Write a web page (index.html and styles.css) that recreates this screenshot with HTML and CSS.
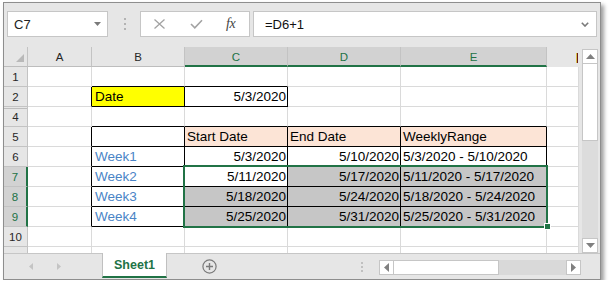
FILE: index.html
```html
<!DOCTYPE html>
<html>
<head>
<meta charset="utf-8">
<link rel="stylesheet" href="styles.css">
</head>
<body>
<div class="window">
  <div class="fbar">
    <div class="namebox"><span>C7</span>
      <svg class="dd" width="7" height="4" viewBox="0 0 7 4"><polygon points="0,0 7,0 3.5,4" fill="#7a7a7a"/></svg>
    </div>
    <div class="vdots"><i></i><i></i><i></i></div>
    <div class="btnbox">
      <svg class="ic-x" width="11" height="10" viewBox="0 0 11 10"><path d="M0.5 0.5 L10.5 9.5 M10.5 0.5 L0.5 9.5" stroke="#a3a3a3" stroke-width="1.3" fill="none"/></svg>
      <svg class="ic-ok" width="13" height="10" viewBox="0 0 13 10"><polyline points="1,5 4.8,8.8 12,1.2" stroke="#a3a3a3" stroke-width="1.6" fill="none"/></svg>
      <span class="fx">fx</span>
    </div>
    <div class="finput"><span>=D6+1</span>
      <svg class="chev" width="8" height="5" viewBox="0 0 8 5"><polyline points="0.8,0.8 4,4 7.2,0.8" stroke="#7a7a7a" stroke-width="1.6" fill="none"/></svg>
    </div>
  </div>

  <div class="main">
    <div class="sheet">
      <div class="grid">
        <div class="ch corner"><svg width="8" height="8" viewBox="0 0 8 8"><polygon points="8,0 8,8 0,8" fill="#b9b9b9"/></svg></div>
        <div class="ch">A</div><div class="ch">B</div>
        <div class="ch sel">C</div><div class="ch sel">D</div><div class="ch sel">E</div>
        <div class="ch last"><span class="cur"></span></div>

        <div class="rh">1</div>
        <div class="c"></div><div class="c kb"></div><div class="c kb"></div><div class="c"></div><div class="c"></div><div class="c"></div>

        <div class="rh">2</div>
        <div class="c kr"></div><div class="c kr kb yellow">Date</div><div class="c kr kb num">5/3/2020</div><div class="c"></div><div class="c"></div><div class="c"></div>

        <div class="rh r4">4</div>
        <div class="c"></div><div class="c kb"></div><div class="c kb"></div><div class="c kb"></div><div class="c kb"></div><div class="c"></div>

        <div class="rh">5</div>
        <div class="c kr"></div><div class="c kr kb"></div><div class="c kr kb peach">Start Date</div><div class="c kr kb peach">End Date</div><div class="c kr kb peach">WeeklyRange</div><div class="c"></div>

        <div class="rh">6</div>
        <div class="c kr"></div><div class="c kr kb wk">Week1</div><div class="c kr kb num">5/3/2020</div><div class="c kr kb num">5/10/2020</div><div class="c kr kb">5/3/2020 - 5/10/2020</div><div class="c"></div>

        <div class="rh rsel">7</div>
        <div class="c kr"></div><div class="c kr kb wk">Week2</div><div class="c kr kb num">5/11/2020</div><div class="c kr kb num hl">5/17/2020</div><div class="c kr kb hl">5/11/2020 - 5/17/2020</div><div class="c"></div>

        <div class="rh rsel">8</div>
        <div class="c kr"></div><div class="c kr kb wk">Week3</div><div class="c kr kb num hl">5/18/2020</div><div class="c kr kb num hl">5/24/2020</div><div class="c kr kb hl">5/18/2020 - 5/24/2020</div><div class="c"></div>

        <div class="rh rsel">9</div>
        <div class="c kr"></div><div class="c kr kb wk">Week4</div><div class="c kr kb num hl">5/25/2020</div><div class="c kr kb num hl">5/31/2020</div><div class="c kr kb hl">5/25/2020 - 5/31/2020</div><div class="c"></div>

        <div class="rh">10</div>
        <div class="c"></div><div class="c"></div><div class="c"></div><div class="c"></div><div class="c"></div><div class="c"></div>

        <div class="rh part"></div>
        <div class="c part"></div><div class="c part"></div><div class="c part"></div><div class="c part"></div><div class="c part"></div><div class="c part"></div>
      </div>
      <div class="selbox"><span class="handle"></span></div>
    </div>
    <div class="vscroll">
      <div class="sbtn"><svg width="9" height="5" viewBox="0 0 9 5"><polygon points="0,5 9,5 4.5,0" fill="#808080"/></svg></div>
      <div class="vthumb"></div>
      <div class="vtrack"></div>
      <div class="sbtn"><svg width="9" height="5" viewBox="0 0 9 5"><polygon points="0,0 9,0 4.5,5" fill="#808080"/></svg></div>
    </div>
  </div>

  <div class="tabbar">
    <div class="nav">
      <svg width="4" height="7" viewBox="0 0 4 7"><polygon points="4,0 4,7 0,3.5" fill="#c4c4c4"/></svg>
      <svg class="navr" width="4" height="7" viewBox="0 0 4 7"><polygon points="0,0 0,7 4,3.5" fill="#c4c4c4"/></svg>
    </div>
    <div class="tab">Sheet1</div>
    <svg class="add" width="15" height="15" viewBox="0 0 15 15"><circle cx="7.5" cy="7.5" r="6.6" fill="none" stroke="#7a7a7a" stroke-width="1.2"/><path d="M7.5 4 V11 M4 7.5 H11" stroke="#7a7a7a" stroke-width="1.4"/></svg>
    <div class="vdots small"><i></i><i></i><i></i></div>
    <div class="hscroll">
      <div class="sbtn h"><svg width="5" height="9" viewBox="0 0 5 9"><polygon points="5,0 5,9 0,4.5" fill="#808080"/></svg></div>
      <div class="hthumb"></div>
      <div class="htrack"></div>
      <div class="sbtn h"><svg width="5" height="9" viewBox="0 0 5 9"><polygon points="0,0 0,9 5,4.5" fill="#808080"/></svg></div>
    </div>
  </div>
</div>
</body>
</html>
```

FILE: styles.css
```css
* { box-sizing: border-box; }
body {
  margin: 0;
  background: #fff;
  font-family: "Liberation Sans", Arial, sans-serif;
}
.window {
  margin: 2px 0 0 3px;
  width: 598px;
  height: 278px;
  border: 1px solid #8e8e8e;
  background: #e6e6e6;
  box-shadow: 3px 3px 4px rgba(0,0,0,0.38);
  display: flex;
  flex-direction: column;
}

/* formula bar */
.fbar {
  height: 44px;
  flex: none;
  display: flex;
  align-items: flex-start;
  padding-top: 8px;
}
.namebox {
  margin-left: 3px;
  width: 101px;
  height: 26px;
  background: #fff;
  border: 1px solid #c6c6c6;
  display: flex;
  align-items: center;
  justify-content: space-between;
  padding: 0 6px 0 6px;
  font-size: 13px;
  color: #222;
}
.namebox .dd { margin-right: 0; }
.vdots {
  margin-left: 16px;
  margin-top: 7px;
  display: flex;
  flex-direction: column;
  gap: 3px;
}
.vdots i {
  display: block;
  width: 2px;
  height: 2px;
  background: #b3b3b3;
}
.btnbox {
  margin-left: 14px;
  width: 110px;
  height: 26px;
  background: #fff;
  border: 1px solid #c6c6c6;
  display: flex;
  align-items: center;
}
.ic-x { margin-left: 13px; }
.ic-ok { margin-left: 25px; }
.fx {
  margin-left: 23px;
  font-family: "Liberation Serif", "DejaVu Serif", serif;
  font-style: italic;
  font-size: 14px;
  color: #444;
  letter-spacing: -0.5px;
}
.finput {
  margin-left: 3px;
  width: 344px;
  height: 26px;
  background: #fff;
  border: 1px solid #c6c6c6;
  display: flex;
  align-items: center;
  justify-content: space-between;
  padding: 0 7px 0 11px;
  font-size: 13px;
  color: #111;
}

/* sheet */
.main {
  height: 206px;
  flex: none;
  display: flex;
}
.sheet {
  position: relative;
  width: 575px;
}
.grid {
  display: grid;
  grid-template-columns: 24px 64px 93px 103px 113px 146px 32px;
  grid-template-rows: repeat(10, 20px) 6px;
  background: #fff;
  font-size: 13.5px;
  color: #000;
}
.ch {
  background: #e6e6e6;
  border-right: 1px solid #c3c3c3;
  border-bottom: 1px solid #bdbdbd;
  font-size: 11.5px;
  color: #262626;
  display: flex;
  align-items: center;
  justify-content: center;
  padding-top: 1px;
}
.ch.corner {
  align-items: flex-end;
  justify-content: flex-end;
  padding: 0 3px 4px 0;
}
.ch.sel {
  background: #d2d2d2;
  color: #217346;
  border-bottom: 2px solid #217346;
  padding-top: 2px;
}
.ch.last {
  border-right: none;
  border-bottom: none;
  background: #e6e6e6;
  justify-content: flex-end;
  padding-right: 1px;
  align-items: flex-start;
}
.cur {
  display: block;
  width: 2px;
  height: 10px;
  margin-top: 5px;
  background: #6e1a1a;
  border-left: 1px solid #d6c24a;
}
.rh {
  background: #e6e6e6;
  border-right: 1px solid #c3c3c3;
  border-bottom: 1px solid #c3c3c3;
  font-size: 11.5px;
  color: #262626;
  display: flex;
  align-items: center;
  justify-content: center;
  padding-top: 1px;
}
.rh.r4 { box-shadow: inset 0 1px 0 #e6e6e6, inset 0 2px 0 #bdbdbd; }
.rh.rsel {
  background: #d2d2d2;
  color: #217346;
  border-right: 2px solid #217346;
}
.rh.part, .c.part { border-bottom: none; }
.c {
  border-right: 1px solid #dadada;
  border-bottom: 1px solid #dadada;
  padding: 1px 2px 0 2px;
  line-height: 18px;
  white-space: nowrap;
  overflow: hidden;
}
.c.kr { border-right-color: #000; }
.c.kb { border-bottom-color: #000; }
.c.num { text-align: right; padding-right: 1px; }
.c.yellow { background: #ffff00; padding-left: 3px; }
.c.peach { background: #fce4d6; }
.c.wk { color: #4a84c6; padding-left: 3px; }
.c.hl { background: #c6c6c6; }

.selbox {
  position: absolute;
  left: 179px;
  top: 118px;
  width: 365px;
  height: 63px;
  border: 2px solid #217346;
}
.handle {
  position: absolute;
  left: 359px;
  top: 56px;
  width: 7px;
  height: 7px;
  background: #217346;
  border: 1px solid #fff;
}

.vscroll {
  margin-left: 3px;
  margin-top: 2px;
  width: 16px;
  display: flex;
  flex-direction: column;
}
.sbtn {
  height: 15px;
  flex: none;
  background: #fff;
  border: 1px solid #c6c6c6;
  display: flex;
  align-items: center;
  justify-content: center;
}
.vthumb {
  height: 78px;
  margin-top: -1px;
  background: #fff;
  border: 1px solid #c6c6c6;
}
.vtrack { flex: 1; background: #dcdcdc; }

/* tab bar */
.tabbar {
  flex: 1;
  border-top: 1px solid #c6c6c6;
  display: flex;
  align-items: center;
  position: relative;
}
.nav {
  width: 98px;
  display: flex;
  align-items: center;
  padding-left: 25px;
}
.navr { margin-left: 24px; }
.tab {
  align-self: flex-start;
  margin-top: -1px;
  width: 65px;
  height: 25px;
  background: #fff;
  border-left: 1px solid #c0c0c0;
  border-right: 1px solid #c0c0c0;
  border-bottom: 2px solid #217346;
  color: #217346;
  font-weight: bold;
  font-size: 12.5px;
  display: flex;
  align-items: center;
  justify-content: center;
  padding-top: 1px;
}
.add { margin-left: 35px; }
.vdots.small {
  margin: 0 0 0 144px;
  gap: 2px;
}
.vdots.small i { background: #c0c0c0; }
.hscroll {
  margin-left: 16px;
  margin-top: 1px;
  width: 202px;
  height: 15px;
  display: flex;
}
.sbtn.h { width: 15px; height: 15px; }
.hthumb {
  width: 106px;
  margin-left: -1px;
  background: #fff;
  border: 1px solid #c6c6c6;
}
.htrack { flex: 1; background: #d9d9d9; }
```
